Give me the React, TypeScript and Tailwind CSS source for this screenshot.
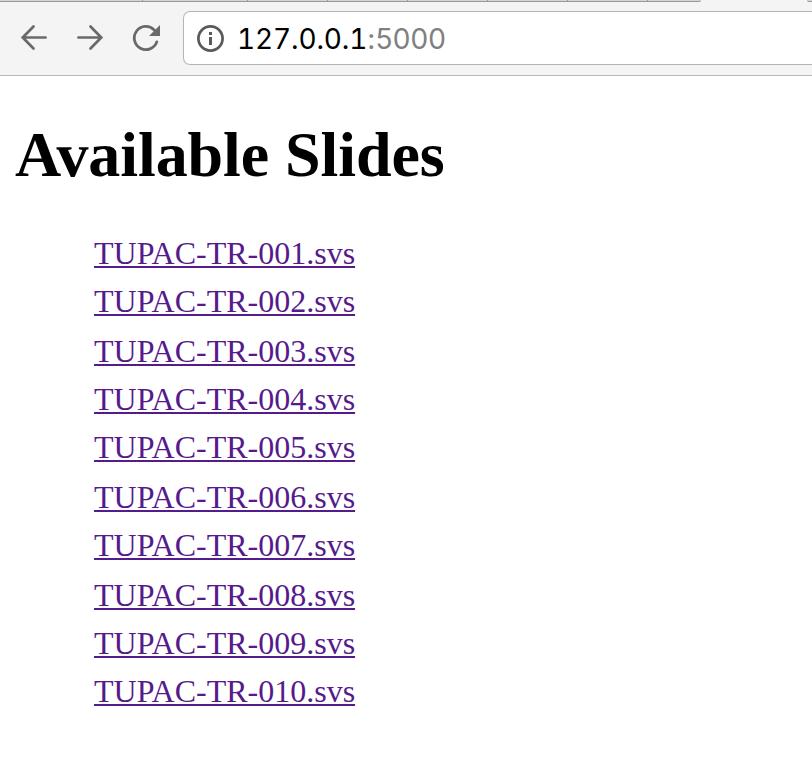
const slides = [
  { name: "TUPAC-TR-001.svs", height: "h-12" },
  { name: "TUPAC-TR-002.svs", height: "h-[50px]" },
  { name: "TUPAC-TR-003.svs", height: "h-12" },
  { name: "TUPAC-TR-004.svs", height: "h-12" },
  { name: "TUPAC-TR-005.svs", height: "h-[50px]" },
  { name: "TUPAC-TR-006.svs", height: "h-12" },
  { name: "TUPAC-TR-007.svs", height: "h-[50px]" },
  { name: "TUPAC-TR-008.svs", height: "h-12" },
  { name: "TUPAC-TR-009.svs", height: "h-12" },
  { name: "TUPAC-TR-010.svs", height: "h-12" },
];

const tabWidths = ["w-[143px]", "w-[105px]", "w-20", "w-20", "w-20", "w-20", "w-20"];

function TabStrip() {
  return (
    <div className="flex h-[2px] w-full">
      <div className="flex h-[2px] w-[701px] rounded-br-[2px] border-b border-[#999999] bg-[#d5d5d5]">
        {tabWidths.map((width, i) => (
          <div key={i} className={`${width} h-px shrink-0 border-r border-[#999999]`} />
        ))}
      </div>
      <div className="ml-auto h-[2px] w-[5px] rounded-bl-[2px] border-b border-[#999999] bg-[#d5d5d5]" />
    </div>
  );
}

function Arrow({ back = false }: { back?: boolean }) {
  return (
    <svg width="28" height="28" viewBox="0 0 28 28" fill="none" stroke="#696969" strokeWidth="2.7" strokeLinecap="round" strokeLinejoin="miter">
      {back ? <path d="M25.6 13.5H3M13.5 2.5L2.7 13.5L13.5 24.5" /> : <path d="M2.4 13.5H25M14.5 2.5L25.3 13.5L14.5 24.5" />}
    </svg>
  );
}

function Reload() {
  return (
    <svg width="28" height="28" viewBox="0 0 28 28" fill="none">
      <path d="M24.8 17.9A11.6 11.6 0 1 1 22.2 5.9" stroke="#696969" strokeWidth="2.8" strokeLinecap="round" />
      <path d="M28 1V12H17Z" fill="#696969" />
    </svg>
  );
}

function Info() {
  return (
    <svg width="28" height="28" viewBox="0 0 28 28" fill="none">
      <circle cx="14.5" cy="14.5" r="12.1" stroke="#5a5a5a" strokeWidth="2.7" />
      <path d="M13 8h3v3h-3zM13 13h3v8h-3z" fill="#5a5a5a" />
    </svg>
  );
}

export default function App() {
  return (
    <div className="h-[758px] w-[812px] overflow-hidden bg-white">
      <header className="flex h-[76px] flex-col border-b border-[#b9b9b9] bg-[#f4f4f4]">
        <TabStrip />
        <div className="flex pt-[9px]">
          <nav className="flex w-[183px] gap-7 pt-[13px] pl-[20px]">
            <Arrow back />
            <Arrow />
            <Reload />
          </nav>
          <div className="flex h-[54px] flex-1 items-center rounded-l-[7px] border border-r-0 border-[#b5b5b5] bg-white pl-[12px]">
            <Info />
            <span className="mt-[2px] ml-[13px] font-['Inter',sans-serif] text-[28px] leading-[34px] text-black">
              <span className="tracking-[-0.15px] tabular-nums">127.0.0.1</span>
              <span className="tracking-[0.2px] text-[#808080]">:5000</span>
            </span>
          </div>
        </div>
      </header>
      <main className="font-['Liberation_Serif',serif]">
        <h1 className="pt-[42px] pl-[15px] text-[64px] leading-[74px] font-bold tracking-[-0.08px] whitespace-nowrap text-black">Available Slides</h1>
        <ul className="pt-[43px] pl-[94px]">
          {slides.map(({ name, height }) => (
            <li key={name} className={`${height} text-[32px] leading-[36px]`}>
              <a href="#" className="text-[#551a8b] underline decoration-2 underline-offset-2">{name}</a>
            </li>
          ))}
        </ul>
      </main>
    </div>
  );
}
